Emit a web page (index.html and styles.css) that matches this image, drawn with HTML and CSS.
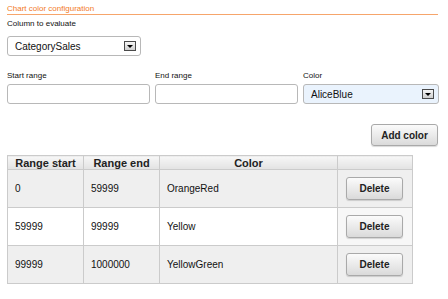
FILE: index.html
```html
<!DOCTYPE html>
<html>
  <head>
    <link rel="stylesheet" href="styles.css">
  </head>
  <body>
    <div class="config">
      <div class="legend">Chart color configuration</div>

      <label class="field-label">Column to evaluate</label>
      <div class="select column-select">
        <span>CategorySales</span>
        <span class="arrow"></span>
      </div>

      <div class="range-row">
        <div class="field">
          <label class="field-label">Start range</label>
          <input class="text-input" type="text">
        </div>
        <div class="field">
          <label class="field-label">End range</label>
          <input class="text-input" type="text">
        </div>
        <div class="field">
          <label class="field-label">Color</label>
          <div class="select color-select">
            <span>AliceBlue</span>
            <span class="arrow"></span>
          </div>
        </div>
      </div>

      <div class="actions">
        <button class="btn add-btn">Add color</button>
      </div>

      <table class="ranges">
        <thead>
          <tr>
            <th class="col-start">Range start</th>
            <th class="col-end">Range end</th>
            <th class="col-color">Color</th>
            <th class="col-del"></th>
          </tr>
        </thead>
        <tbody>
          <tr class="odd">
            <td>0</td>
            <td>59999</td>
            <td>OrangeRed</td>
            <td class="del-cell"><button class="btn del-btn">Delete</button></td>
          </tr>
          <tr>
            <td>59999</td>
            <td>99999</td>
            <td>Yellow</td>
            <td class="del-cell"><button class="btn del-btn">Delete</button></td>
          </tr>
          <tr class="odd">
            <td>99999</td>
            <td>1000000</td>
            <td>YellowGreen</td>
            <td class="del-cell"><button class="btn del-btn">Delete</button></td>
          </tr>
        </tbody>
      </table>
    </div>
  </body>
</html>
```

FILE: styles.css
```css
body {
  margin: 0;
  padding: 0;
  background-color: #fff;
  font-family: "Liberation Sans", Arial, sans-serif;
  color: #111;
}

.config {
  display: flex;
  flex-direction: column;
  padding: 5px 10px 0 7px;
}

.legend {
  font-size: 8px;
  line-height: 8px;
  color: #f27a1f;
  padding-bottom: 1px;
  border-bottom: 1px solid #f6a56b;
}

.field-label {
  display: block;
  font-size: 8px;
  line-height: 10px;
  color: #111;
}

.config > .field-label {
  margin-top: 4px;
}

.select {
  display: flex;
  align-items: center;
  justify-content: space-between;
  box-sizing: border-box;
  height: 20px;
  padding: 0 4px 0 7px;
  border: 1px solid #b8b8b8;
  border-radius: 3px;
  background-color: #fff;
  font-size: 10px;
}

.column-select {
  width: 134px;
  margin-top: 7px;
}

.color-select {
  width: 136px;
  background-color: #eaf3fd;
}

.arrow {
  display: flex;
  align-items: center;
  justify-content: center;
  box-sizing: border-box;
  width: 12px;
  height: 10px;
  border: 1px solid #4a4a4a;
  background: linear-gradient(#f6f6f6, #cfcfcf);
}

.arrow::after {
  content: "";
  border-left: 3px solid transparent;
  border-right: 3px solid transparent;
  border-top: 3px solid #000;
}

.range-row {
  display: flex;
  gap: 5px;
  margin-top: 15px;
}

.field {
  display: flex;
  flex-direction: column;
  gap: 3px;
}

.text-input {
  box-sizing: border-box;
  width: 143px;
  height: 20px;
  margin: 0;
  border: 1px solid #b8b8b8;
  border-radius: 3px;
  background-color: #fff;
}

.actions {
  display: flex;
  justify-content: flex-end;
  margin-top: 20px;
}

.btn {
  box-sizing: border-box;
  border: 1px solid #a9a9a9;
  border-radius: 3px;
  background: linear-gradient(#fbfbfb, #dadada);
  box-shadow: 0 1px 1px rgba(0, 0, 0, 0.15);
  font-family: "Liberation Sans", Arial, sans-serif;
  font-weight: bold;
  font-size: 10px;
  color: #222;
  padding: 0;
}

.add-btn {
  width: 67px;
  height: 22px;
}

.ranges {
  margin-top: 9px;
  width: 406px;
  border-collapse: collapse;
  font-size: 10px;
}

.ranges th,
.ranges td {
  border: 1px solid #cbcbcb;
}

.ranges th {
  height: 13px;
  padding: 0;
  font-size: 11px;
  line-height: 12px;
  font-weight: bold;
  color: #222;
  background: linear-gradient(#f7f7f7, #e2e2e2);
}

.col-start,
.col-end {
  width: 75px;
}

.col-del {
  width: 74px;
}

.ranges td {
  height: 37px;
  padding: 0 0 0 7px;
  background-color: #fff;
}

.ranges tr.odd td {
  background-color: #efefef;
}

.ranges td.del-cell {
  padding: 0 0 0 8px;
  background-color: #f7f7f7;
}

.ranges tr.odd td.del-cell {
  background-color: #efefef;
}

.del-btn {
  display: block;
  width: 57px;
  height: 23px;
}
```
